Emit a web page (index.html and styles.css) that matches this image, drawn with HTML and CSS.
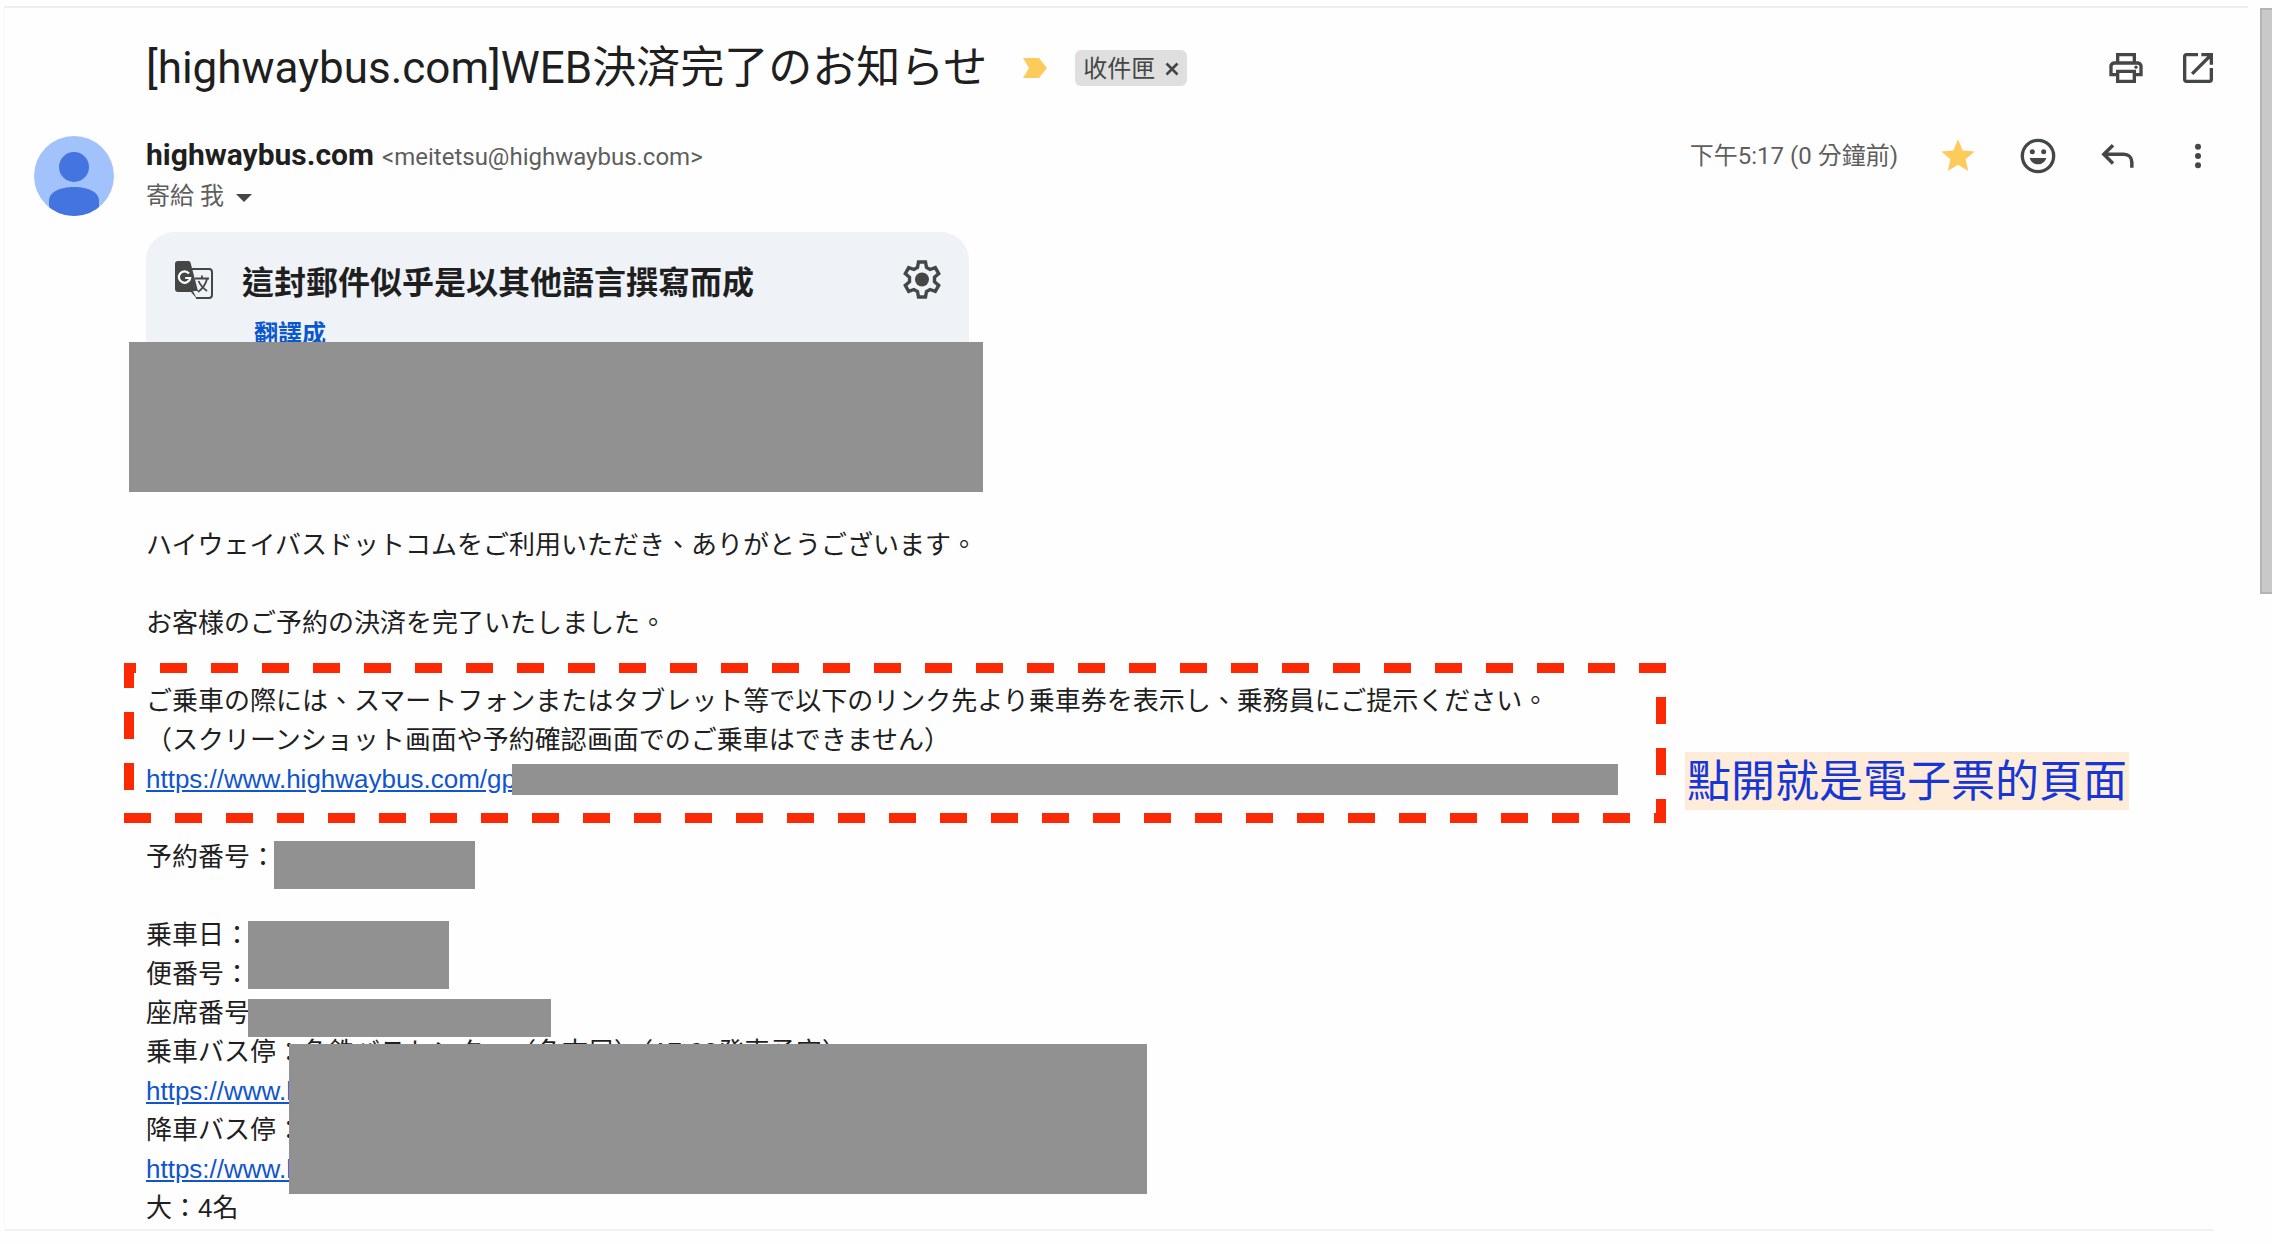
FILE: index.html
```html
<!DOCTYPE html>
<html lang="zh-Hant">
<head>
  <meta charset="UTF-8">
  <title>[highwaybus.com]WEB決済完了のお知らせ</title>
  <link rel="stylesheet" href="styles.css">
</head>
<body>
  <main class="mail">
    <header class="subject-row">
      <h1 class="subject">[highwaybus.com]WEB決済完了のお知らせ</h1>
      <svg class="important" viewBox="0 0 24 20"><path d="M0 0h16l8 10-8 10H0l6-10z" fill="#fdcb5c"/></svg>
      <div class="label">
        <span>收件匣</span>
        <button class="label-close" aria-label="移除標籤"><svg viewBox="0 0 14 14"><path d="M1.500 1.500l11 11M12.500 1.500l-11 11" stroke="#444746" stroke-width="2.600"/></svg></button>
      </div>
      <div class="tools">
        <button class="icon-btn" aria-label="全部列印"><svg viewBox="0 0 24 24"><path d="M19 8h-1V3H6v5H5c-1.660 0-3 1.340-3 3v6h4v4h12v-4h4v-6c0-1.660-1.340-3-3-3zM8 5h8v3H8V5zm8 12v2H8v-4h8v2zm2-2v-2H6v2H4v-4c0-.550.450-1 1-1h14c.550 0 1 .450 1 1v4h-2z"/><circle cx="18" cy="11.500" r="1"/></svg></button>
        <button class="icon-btn" aria-label="在新視窗中開啟"><svg viewBox="0 0 24 24"><path d="M19 19H5V5h7V3H5c-1.110 0-2 .900-2 2v14c0 1.100.890 2 2 2h14c1.100 0 2-.900 2-2v-7h-2v7zM14 3v2h3.590l-9.830 9.830 1.410 1.410L19 6.410V10h2V3h-7z"/></svg></button>
      </div>
    </header>

    <section class="sender-row">
      <svg class="avatar" viewBox="0 0 80 80">
        <defs><clipPath id="face"><circle cx="40" cy="40" r="40"/></clipPath></defs>
        <g clip-path="url(#face)">
          <rect width="80" height="80" fill="#a1c2fa"/>
          <circle cx="40" cy="31" r="15" fill="#4374e0"/>
          <path d="M15 80V65c0-9 11-14 25-14s25 5 25 14v15z" fill="#4374e0"/>
        </g>
      </svg>
      <div class="sender">
        <div class="from"><strong class="name">highwaybus.com</strong><span class="addr">&lt;meitetsu@highwaybus.com&gt;</span></div>
        <button class="to">寄給 我 <span class="caret"></span></button>
      </div>
      <time class="time">下午5:17 (0 分鐘前)</time>
      <div class="tools">
        <button class="icon-btn star" aria-label="已加星號"><svg viewBox="0 0 24 24"><path d="M12 17.270L18.180 21l-1.640-7.030L22 9.240l-7.190-.610L12 2 9.190 8.630 2 9.240l5.460 4.730L5.820 21z"/></svg></button>
        <button class="icon-btn" aria-label="新增回應"><svg viewBox="0 0 24 24"><circle cx="12" cy="12" r="9.400" fill="none" stroke="#444746" stroke-width="2"/><circle cx="8.600" cy="9.500" r="1.500"/><circle cx="15.400" cy="9.500" r="1.500"/><path d="M7 13.200h10c-.700 2.300-2.600 3.800-5 3.800s-4.300-1.500-5-3.800z"/></svg></button>
        <button class="icon-btn" aria-label="回覆"><svg viewBox="0 0 24 24"><path d="M9 5.500L3.500 11 9 16.500M4 11h11.500c2.800 0 4.800 2 4.800 4.800V19" fill="none" stroke="#444746" stroke-width="2.100"/></svg></button>
        <button class="icon-btn" aria-label="更多"><svg viewBox="0 0 24 24"><circle cx="12" cy="6.500" r="1.800"/><circle cx="12" cy="12" r="1.800"/><circle cx="12" cy="17.500" r="1.800"/></svg></button>
      </div>
    </section>

    <section class="translate">
      <div class="translate-head">
        <svg class="translate-icon" viewBox="0 0 40 40">
          <path d="M16 9h19a3 3 0 0 1 3 3v23a3 3 0 0 1-3 3H22" fill="none" stroke="#444746" stroke-width="2"/>
          <path d="M4 1h10.500a2 2 0 0 1 2 1.500L24 31l-5 0 4 8-6-7H4a3 3 0 0 1-3-3V4a3 3 0 0 1 3-3z" fill="#444746"/>
          <path d="M15 13.500a5.700 5.700 0 1 0 1.200 4.500h-5" fill="none" stroke="#fff" stroke-width="2.200"/>
          <path d="M21 18.500h14M28 15.500v3M33 19c-1.500 6-5 10-9 13M24.500 21c2 4.500 5 7.500 8.500 10" fill="none" stroke="#444746" stroke-width="1.800"/>
        </svg>
        <h2 class="translate-title">這封郵件似乎是以其他語言撰寫而成</h2>
        <button class="icon-btn gear" aria-label="設定"><svg viewBox="0 0 40 40"><path d="M16.500 2h7l1 5.500 3.500 2 5.300-1.900 3.400 6-4.200 3.600v4.600l4.200 3.600-3.400 6-5.300-1.900-3.500 2-1 5.500h-7l-1-5.500-3.500-2-5.300 1.900-3.400-6 4.200-3.600v-4.600l-4.200-3.600 3.400-6 5.300 1.900 3.500-2z" fill="none" stroke="#444746" stroke-width="3.400"/><circle cx="20" cy="19.500" r="7"/></svg></button>
      </div>
      <a class="translate-link" href="#">翻譯成</a>
      <div class="mask mask-card"></div>
    </section>

    <article class="body">
      <p>ハイウェイバスドットコムをご利用いただき、ありがとうございます。</p>
      <p>お客様のご予約の決済を完了いたしました。</p>
      <div class="notice">
        <p>ご乗車の際には、スマートフォンまたはタブレット等で以下のリンク先より乗車券を表示し、乗務員にご提示ください。<br>
        （スクリーンショット画面や予約確認画面でのご乗車はできません）<br>
        <a href="#">https://www.highwaybus.com/gp</a></p>
        <div class="frame"></div>
        <div class="mask mask-link"></div>
        <div class="callout">點開就是電子票的頁面</div>
      </div>
      <div class="line">予約番号：<span class="mask mask-number"></span></div>
      <div class="trip">
        <div class="line">乗車日：<span class="mask mask-date"></span></div>
        <div class="line">便番号：</div>
        <div class="line">座席番号<span class="mask mask-seat"></span></div>
        <div class="line">乗車バス停：名鉄バスセンター（名古屋）（17:00発車予定）</div>
        <div class="line"><a href="#">https://www.h</a></div>
        <div class="line">降車バス停：</div>
        <div class="line"><a href="#">https://www.h</a></div>
        <div class="line">大：4名</div>
        <div class="mask mask-stops"></div>
      </div>
    </article>
  </main>
  <div class="scroll-thumb"></div>
</body>
</html>
```
FILE: styles.css
```css
* {
  box-sizing: border-box;
}

body {
  margin: 0;
  background: #fefefe;
  color: #1f1f1f;
  font-family: Roboto, "Noto Sans CJK TC", sans-serif;
}

h1, h2, p {
  margin: 0;
}

button {
  border: none;
  background: none;
  padding: 0;
  color: inherit;
  font: inherit;
  cursor: pointer;
}

.mail {
  margin: 6px 24px 0 4px;
  padding: 26px 30px 0 29px;
  border-top: 2px solid #eeefef;
  border-left: 1px solid #f8f8f8;
}

.mail::after {
  content: "";
  display: block;
  height: 2px;
  margin: 1px 4px 0 -29px;
  background: #f0f1f1;
}

/* subject */
.subject-row {
  display: flex;
  align-items: center;
  height: 68px;
  padding-left: 112px;
}

.subject {
  font-size: 44px;
  font-weight: 400;
  line-height: 68px;
}

.important {
  width: 24px;
  height: 20px;
  margin: 0 28px 0 36px;
}

.label {
  display: flex;
  align-items: center;
  gap: 10px;
  height: 36px;
  padding: 0 8px;
  border-radius: 6px;
  background: #dedfde;
  color: #444746;
  font-size: 24px;
}

.label span {
  padding-bottom: 4px;
}

.label-close {
  padding-top: 2px;
}

.label-close svg {
  display: block;
  width: 14px;
  height: 14px;
}

.tools {
  display: flex;
  margin-left: auto;
}

.icon-btn {
  width: 40px;
  height: 40px;
  margin-left: 32px;
}

.icon-btn svg {
  display: block;
  width: 100%;
  height: 100%;
  fill: #444746;
}

.star svg {
  fill: #fdcb5c;
}

/* sender */
.sender-row {
  display: flex;
  align-items: flex-start;
  height: 114px;
  padding-top: 34px;
}

.avatar {
  width: 80px;
  height: 80px;
}

.sender {
  flex: 1;
  margin-left: 32px;
}

.from {
  display: flex;
  align-items: baseline;
  gap: 8px;
  line-height: 38px;
}

.name {
  font-size: 30px;
}

.addr,
.time {
  color: #5e5e5e;
  font-size: 24px;
}

.to {
  display: block;
  color: #5e5e5e;
  font-size: 24px;
  line-height: 40px;
}

.caret {
  display: inline-block;
  margin-left: 6px;
  border: 8px solid transparent;
  border-top-color: #444746;
  border-bottom: 0;
  vertical-align: middle;
}

.time {
  line-height: 40px;
}

.sender-row .tools {
  margin-left: 0;
}

.sender-row .icon-btn {
  margin-left: 40px;
}

/* translate card */
.translate {
  position: relative;
  width: 823px;
  height: 150px;
  margin: 16px 0 0 112px;
  padding: 28px 27px 0 28px;
  border-radius: 28px;
  background: #eff3f8;
}

.translate-head {
  display: flex;
  align-items: center;
  height: 40px;
}

.translate-icon {
  width: 40px;
  height: 40px;
}

.translate-title {
  margin-left: 28px;
  font-size: 32px;
  font-weight: 700;
}

.gear {
  margin-left: auto;
}

.translate-link {
  display: block;
  margin: 16px 0 0 80px;
  color: #0b57d0;
  font-size: 24px;
  font-weight: 700;
  line-height: 36px;
  text-decoration: none;
}

.mask {
  position: absolute;
  background: #919191;
}

.mask-card {
  top: 110px;
  left: -17px;
  width: 854px;
  height: 150px;
}

/* message */
.body {
  margin: 144px 0 0 112px;
  font-family: "Liberation Sans", "Noto Sans CJK TC", sans-serif;
  font-size: 26px;
  line-height: 39px;
}

.body p {
  margin-bottom: 39px;
}

.body a {
  color: #1155cc;
}

.line {
  position: relative;
  height: 39px;
}

.notice,
.trip {
  position: relative;
}

.trip {
  margin-top: 39px;
}

/* dashed frame, 27px dashes with 24px gaps */
.frame {
  position: absolute;
  top: -19px;
  left: -22px;
  width: 1542px;
  height: 160px;
  background:
    repeating-linear-gradient(to left, #fb2a05 0 27px, transparent 27px 51px) top / 100% 10px no-repeat,
    repeating-linear-gradient(to right, #fb2a05 0 27px, transparent 27px 51px) bottom / 100% 10px no-repeat,
    repeating-linear-gradient(to bottom, #fb2a05 0 25px, transparent 25px 49px, #fb2a05 49px 51px) left / 10px 100% no-repeat,
    repeating-linear-gradient(to top, #fb2a05 0 24px, transparent 24px 48px, #fb2a05 48px 51px) right / 10px 100% no-repeat;
}

.callout {
  position: absolute;
  top: 70px;
  left: 1539px;
  padding: 1px 2px 0;
  background: #feecd9;
  color: #1637d5;
  font-size: 44px;
  line-height: 57px;
  white-space: nowrap;
}

.mask-link {
  top: 82px;
  left: 366px;
  width: 1106px;
  height: 31px;
}

.mask-number {
  top: 3px;
  left: 128px;
  width: 201px;
  height: 48px;
}

.mask-date {
  top: 5px;
  left: 102px;
  width: 201px;
  height: 68px;
  z-index: 1;
}

.mask-seat {
  top: 5px;
  left: 102px;
  width: 303px;
  height: 38px;
}

.mask-stops {
  top: 128px;
  left: 143px;
  width: 858px;
  height: 150px;
}

.scroll-thumb {
  position: absolute;
  top: 8px;
  right: 0;
  width: 12px;
  height: 586px;
  border: 2px solid #b4b4b4;
  border-right: none;
  background: #c9c9c9;
}
```
